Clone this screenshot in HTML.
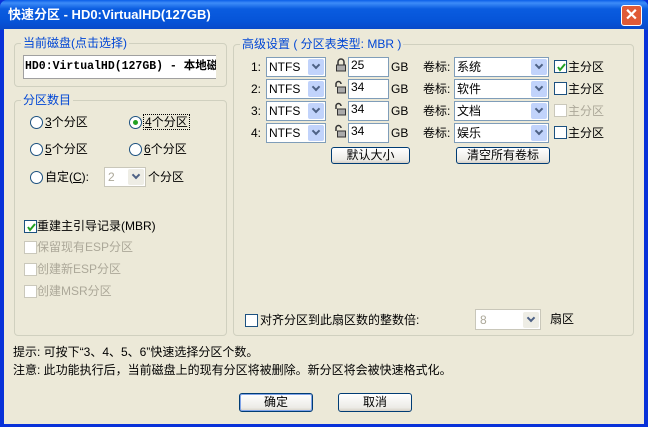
<!DOCTYPE html>
<html><head><meta charset="utf-8"><style>
*{box-sizing:border-box;margin:0;padding:0}
body{width:648px;height:427px;overflow:hidden;background:#0831d9;font-family:"Liberation Sans","Noto Sans CJK SC",sans-serif;font-size:12px;color:#000;position:relative;line-height:14px}
.a{position:absolute;white-space:nowrap;line-height:14px}
#tb{left:0;top:0;width:648px;height:30px;background:linear-gradient(#0a5fe8 0%,#3d8cf8 10%,#0a5ce0 30%,#0654d8 70%,#0848c8 100%);border-radius:7px 7px 0 0}
#cl{left:4px;top:29px;width:640px;height:395px;background:#ece9d8}
.grp{position:absolute;border:1px solid #d0d0bf;border-radius:4px}
.lbl{position:absolute;background:#ece9d8;color:#0046d5;padding:0 2px;line-height:14px;top:-8px;left:6px;white-space:nowrap}
.cb{position:absolute;width:20px;height:20px;border:1px solid #7f9db9;background:#fff}
.arr{position:absolute;right:1px;top:1px;width:16px;height:16px;background:#c1d3fb;border-radius:2px}
.arr:after{content:"";position:absolute;left:5px;top:3px;width:4px;height:4px;border-right:2px solid #4d6185;border-bottom:2px solid #4d6185;transform:rotate(45deg)}
.chk{position:absolute;width:13px;height:13px;border:1px solid #1c5180;background:#fff}
.chk.d{border-color:#cac8bb}
.chk svg{position:absolute;left:1px;top:1px}
.rad{position:absolute;width:13px;height:13px;border:1px solid #1c5180;border-radius:50%;background:#fff}
.btn{position:absolute;border:1px solid #003c74;border-radius:3px;background:linear-gradient(#fff,#ecebe6 80%,#d6d0c5);text-align:center;line-height:15px}
.g{color:#aca899}
.inp{position:absolute;border:1px solid #7f9db9;background:#fff;width:41px;height:20px;padding-left:2px;line-height:15px}
.lk{position:absolute}
</style></head><body>
<div id="tb" class="a"></div>
<div class="a" style="left:8px;top:8px;color:#fff;font-weight:bold;font-size:13px">快速分区 - HD0:VirtualHD(127GB)</div>
<div class="a" style="left:621px;top:5px;width:21px;height:21px;background:#e05a36;border:1px solid #fff;border-radius:3px;color:#fff;font-size:16px;font-weight:bold;text-align:center;line-height:19px">✕</div>
<div id="cl" class="a"></div>

<div class="grp" style="left:14px;top:43px;width:213px;height:44px"><span class="lbl">当前磁盘(点击选择)</span></div>
<div class="a" style="left:23px;top:55px;width:193px;height:24px;border:1px solid #a0a0a0;border-right:none;background:#fff;overflow:hidden;font-weight:bold;line-height:22px;padding-left:1px;font-family:'Liberation Mono','Noto Sans CJK SC',monospace;font-size:11.5px">HD0:VirtualHD(127GB) - 本地磁盘</div>

<div class="grp" style="left:14px;top:100px;width:213px;height:236px"><span class="lbl">分区数目</span></div>
<div class="rad" style="left:30px;top:116px"></div><div class="a" style="left:45px;top:115px"><u>3</u>个分区</div>
<div class="rad" style="left:129px;top:116px"><div style="position:absolute;left:3px;top:3px;width:5px;height:5px;border-radius:50%;background:#21a121"></div></div><div class="a" style="left:143px;top:114px;border:1px dotted #000;padding:0 1px"><u>4</u>个分区</div>
<div class="rad" style="left:30px;top:143px"></div><div class="a" style="left:45px;top:142px"><u>5</u>个分区</div>
<div class="rad" style="left:129px;top:143px"></div><div class="a" style="left:144px;top:142px"><u>6</u>个分区</div>
<div class="rad" style="left:30px;top:171px"></div><div class="a" style="left:45px;top:170px">自定(<u>C</u>):</div>
<div class="cb" style="left:104px;top:167px;width:42px;border-color:#c9c7ba"><span class="a g" style="left:3px;top:2px">2</span><div class="arr" style="background:#eeede5"></div></div>
<div class="a" style="left:148px;top:170px">个分区</div>

<div class="chk" style="left:24px;top:220px"><svg width="11" height="11"><path d="M2 5l2 3 5-6" stroke="#21a121" stroke-width="2" fill="none"/></svg></div><div class="a" style="left:37px;top:219px">重建主引导记录(MBR)</div>
<div class="chk d" style="left:24px;top:241px"></div><div class="a g" style="left:37px;top:240px">保留现有ESP分区</div>
<div class="chk d" style="left:24px;top:263px"></div><div class="a g" style="left:37px;top:262px">创建新ESP分区</div>
<div class="chk d" style="left:24px;top:285px"></div><div class="a g" style="left:37px;top:284px">创建MSR分区</div>

<div class="grp" style="left:233px;top:44px;width:401px;height:292px"><span class="lbl">高级设置 ( 分区表类型: MBR )</span></div>

<div class="a" style="left:251px;top:60px">1:</div><div class="a" style="left:251px;top:82px">2:</div><div class="a" style="left:251px;top:104px">3:</div><div class="a" style="left:251px;top:126px">4:</div>
<div class="cb" style="left:266px;top:57px;width:60px"><span class="a" style="left:2px;top:2px">NTFS</span><div class="arr"></div></div>
<div class="cb" style="left:266px;top:79px;width:60px"><span class="a" style="left:2px;top:2px">NTFS</span><div class="arr"></div></div>
<div class="cb" style="left:266px;top:101px;width:60px"><span class="a" style="left:2px;top:2px">NTFS</span><div class="arr"></div></div>
<div class="cb" style="left:266px;top:123px;width:60px"><span class="a" style="left:2px;top:2px">NTFS</span><div class="arr"></div></div>
<svg class="lk" style="left:335px;top:58px" width="12" height="14"><path d="M3 7V4a3 3 0 0 1 6 0v3" stroke="#333" stroke-width="1.5" fill="none"/><rect x="1.5" y="7" width="9" height="6" fill="#aaa" stroke="#333"/></svg>
<svg class="lk" style="left:334px;top:80px" width="13" height="14"><path d="M2 7V4a2.5 2.5 0 0 1 5 0" stroke="#333" stroke-width="1.5" fill="none"/><rect x="3.5" y="7" width="8" height="6" fill="#aaa" stroke="#333"/></svg>
<svg class="lk" style="left:334px;top:102px" width="13" height="14"><path d="M2 7V4a2.5 2.5 0 0 1 5 0" stroke="#333" stroke-width="1.5" fill="none"/><rect x="3.5" y="7" width="8" height="6" fill="#aaa" stroke="#333"/></svg>
<svg class="lk" style="left:334px;top:124px" width="13" height="14"><path d="M2 7V4a2.5 2.5 0 0 1 5 0" stroke="#333" stroke-width="1.5" fill="none"/><rect x="3.5" y="7" width="8" height="6" fill="#aaa" stroke="#333"/></svg>
<div class="inp" style="left:348px;top:57px">25</div>
<div class="inp" style="left:348px;top:79px">34</div>
<div class="inp" style="left:348px;top:101px">34</div>
<div class="inp" style="left:348px;top:123px">34</div>
<div class="a" style="left:391px;top:60px">GB</div><div class="a" style="left:391px;top:82px">GB</div><div class="a" style="left:391px;top:104px">GB</div><div class="a" style="left:391px;top:126px">GB</div>
<div class="a" style="left:423px;top:60px">卷标:</div><div class="a" style="left:423px;top:82px">卷标:</div><div class="a" style="left:423px;top:104px">卷标:</div><div class="a" style="left:423px;top:126px">卷标:</div>
<div class="cb" style="left:454px;top:57px;width:95px"><span class="a" style="left:2px;top:2px">系统</span><div class="arr"></div></div>
<div class="cb" style="left:454px;top:79px;width:95px"><span class="a" style="left:2px;top:2px">软件</span><div class="arr"></div></div>
<div class="cb" style="left:454px;top:101px;width:95px"><span class="a" style="left:2px;top:2px">文档</span><div class="arr"></div></div>
<div class="cb" style="left:454px;top:123px;width:95px"><span class="a" style="left:2px;top:2px">娱乐</span><div class="arr"></div></div>
<div class="chk" style="left:554px;top:60px"><svg width="11" height="11"><path d="M2 5l2 3 5-6" stroke="#21a121" stroke-width="2" fill="none"/></svg></div><div class="a" style="left:568px;top:60px">主分区</div>
<div class="chk" style="left:554px;top:82px"></div><div class="a" style="left:568px;top:82px">主分区</div>
<div class="chk d" style="left:554px;top:104px"></div><div class="a g" style="left:568px;top:104px">主分区</div>
<div class="chk" style="left:554px;top:126px"></div><div class="a" style="left:568px;top:126px">主分区</div>
<div class="btn" style="left:331px;top:147px;width:79px;height:17px">默认大小</div>
<div class="btn" style="left:456px;top:147px;width:94px;height:17px">清空所有卷标</div>

<div class="chk" style="left:245px;top:314px"></div><div class="a" style="left:260px;top:313px">对齐分区到此扇区数的整数倍:</div>
<div class="cb" style="left:475px;top:309px;width:66px;height:21px;border-color:#c9c7ba"><span class="a g" style="left:4px;top:3px">8</span><div class="arr" style="background:#eeede5;top:2px"></div></div>
<div class="a" style="left:550px;top:312px">扇区</div>

<div class="a" style="left:13px;top:345px">提示: 可按下“3、4、5、6”快速选择分区个数。</div>
<div class="a" style="left:13px;top:363px">注意: 此功能执行后，当前磁盘上的现有分区将被删除。新分区将会被快速格式化。</div>
<div class="btn" style="left:239px;top:393px;width:74px;height:19px;box-shadow:inset 0 0 0 1px #7fa3e8;line-height:17px">确定</div>
<div class="btn" style="left:338px;top:393px;width:74px;height:19px;line-height:17px">取消</div>
</body></html>
